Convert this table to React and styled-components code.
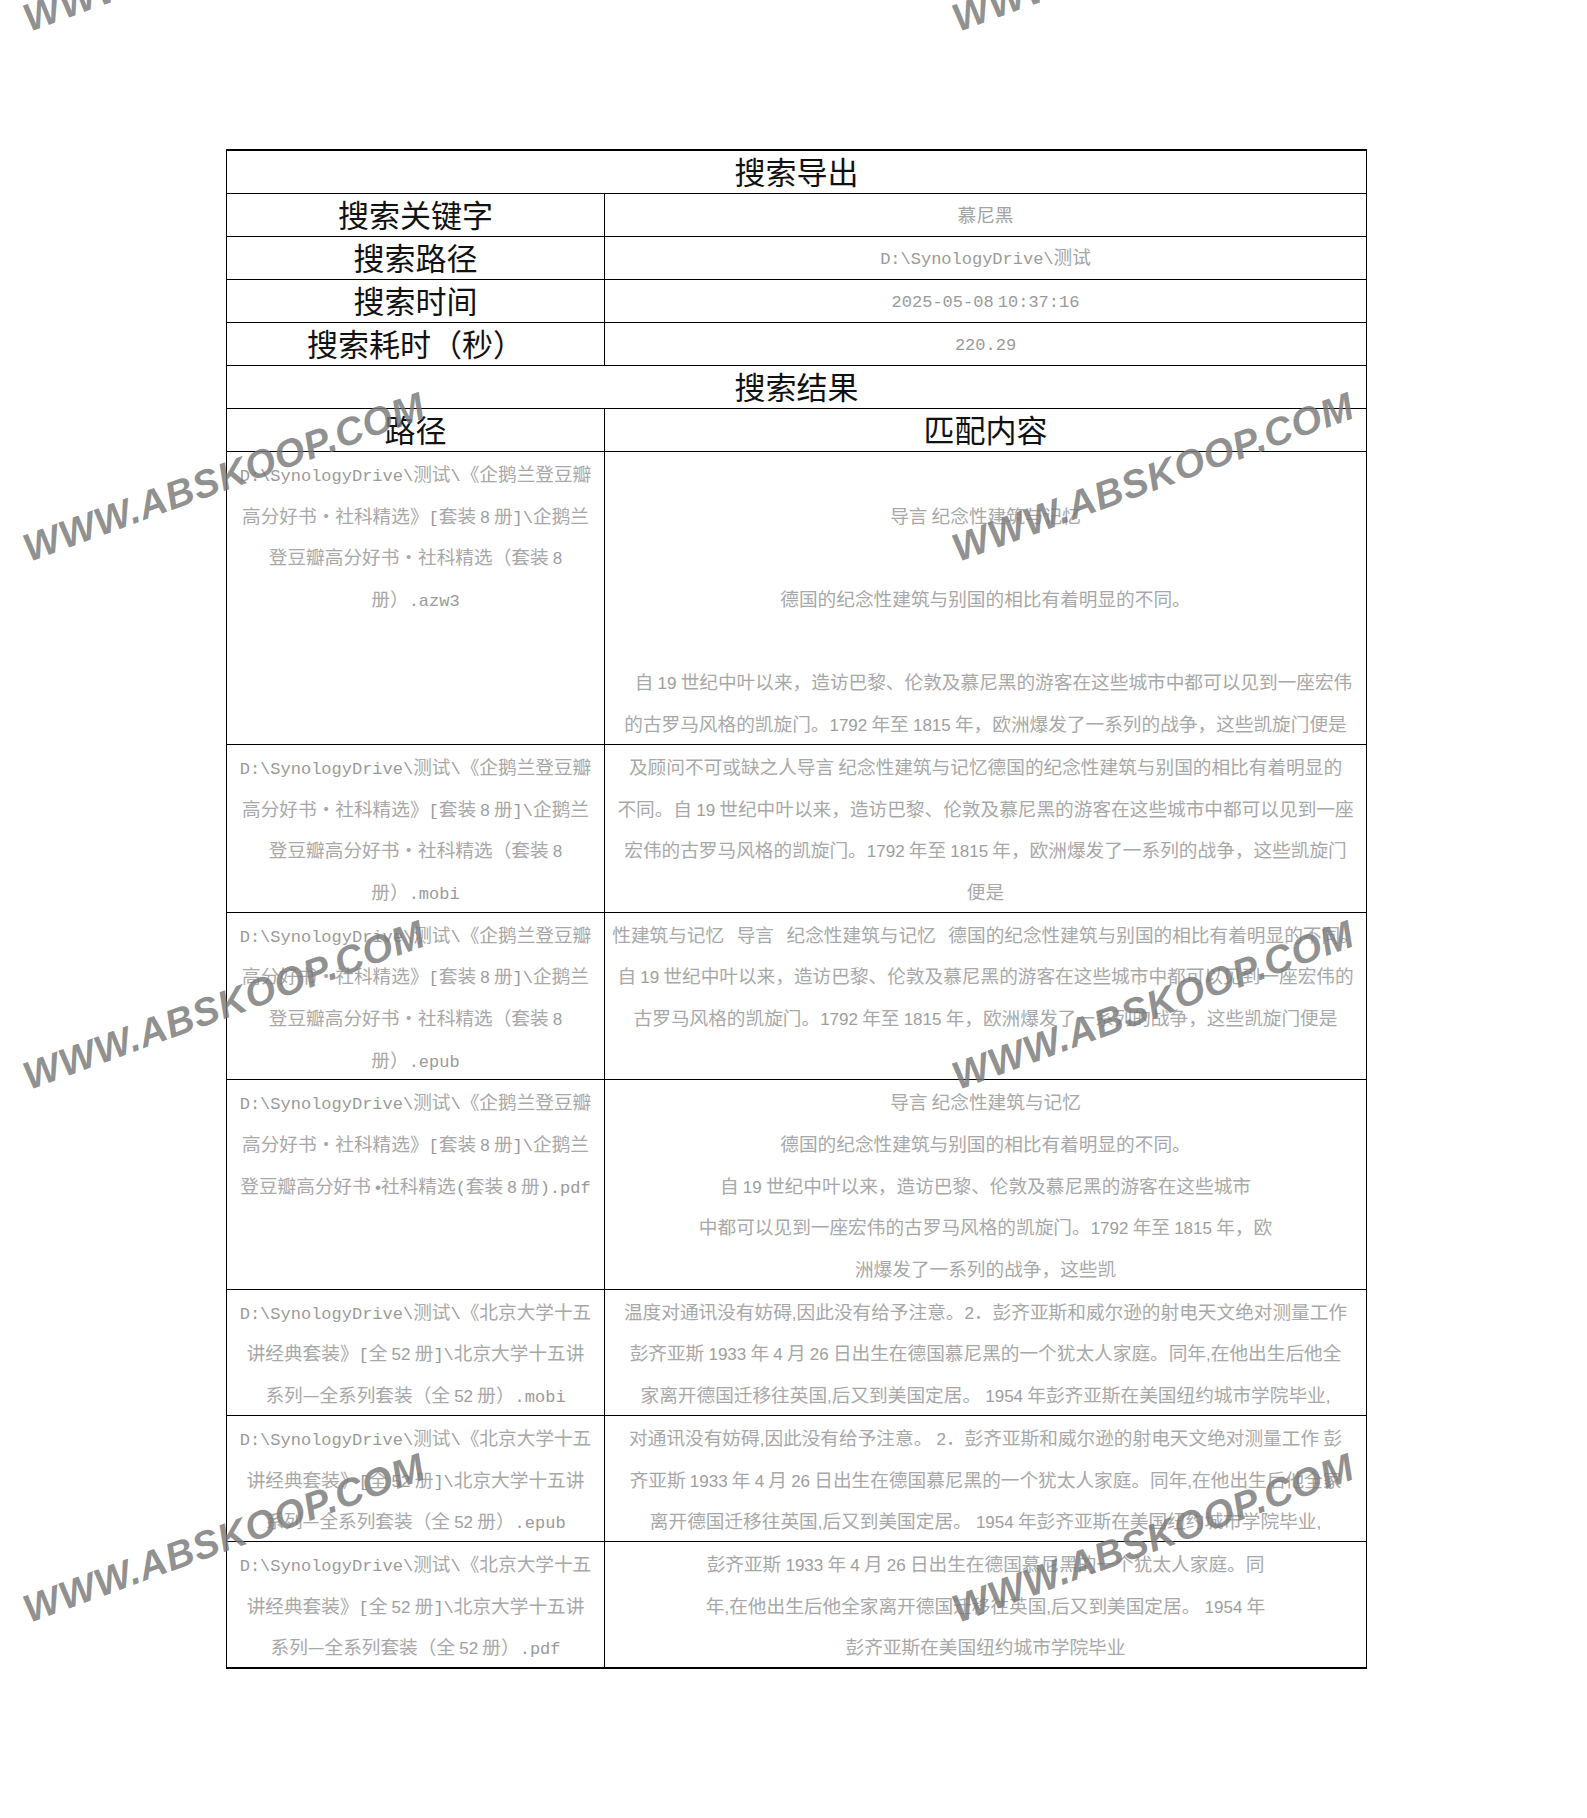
import React from "react";
import styled, { createGlobalStyle } from "styled-components";

const GlobalStyle = createGlobalStyle`
  html, body { margin: 0; padding: 0; background: #ffffff; }
  body { font-family: "Noto Sans CJK SC", "Noto Sans", sans-serif; }
`;

const Page = styled.div`
  position: relative;
  min-height: 1818px;
  overflow: hidden;
  box-sizing: border-box;
  padding: 149px 0 0 226px;
`;

const Sheet = styled.table`
  width: 1140px;
  border-collapse: collapse;
  table-layout: fixed;
  border-top: 2px solid #000;
  border-bottom: 2px solid #000;
  border-left: 1px solid #000;
  border-right: 1px solid #000;
`;

const HeadCell = styled.td`
  height: 38px;
  padding: 0 0 4px;
  border: 1px solid #000;
  text-align: center;
  vertical-align: middle;
  font-family: "Noto Sans CJK SC", sans-serif;
  font-size: 31px;
  line-height: 1;
  color: #111;
  white-space: nowrap;
`;

const ValueCell = styled.td`
  height: 40px;
  padding: 0 0 2px;
  border: 1px solid #000;
  text-align: center;
  vertical-align: middle;
  font-family: "Noto Sans CJK SC", sans-serif;
  font-size: 18.67px;
  line-height: 1;
  color: #a3a3a3;
  white-space: nowrap;
`;

const DataCell = styled.td`
  padding: 0 6px;
  border: 1px solid #000;
  text-align: center;
  vertical-align: top;
  font-family: "Noto Sans CJK SC", sans-serif;
  font-size: 18.67px;
  line-height: 41.7px;
  color: #a8a8a8;
`;

const Line = styled.div`
  height: 41.7px;
  white-space: pre;
  padding-left: ${(p) => (p.$indent ? "16px" : "0")};
`;

const Mono = styled.span`
  font-family: "Liberation Mono", "DejaVu Sans Mono", monospace;
  font-size: 17px;
  color: #9a9a9a;
`;

const Latin = styled.span`
  font-family: "Liberation Sans", Arial, sans-serif;
  font-size: 17px;
  color: #9e9e9e;
`;

const Watermark = styled.span`
  position: absolute;
  left: ${(p) => p.$x}px;
  top: ${(p) => p.$y - 32}px;
  transform-origin: 0 32px;
  transform: rotate(-20deg);
  font-family: "Liberation Sans", Arial, sans-serif;
  font-weight: 700;
  font-style: italic;
  font-size: 39px;
  line-height: 1;
  letter-spacing: 0.8px;
  color: rgba(120, 120, 120, 0.82);
  white-space: nowrap;
  pointer-events: none;
`;

function Runs({ text, mode }) {
  const parts = text.split(/([!-~•]+)/);
  return parts.map((part, i) => {
    if (!part) return null;
    if (/^[!-~•]+$/.test(part)) {
      const latin = /^[0-9•]+$/.test(part);
      if (mode === "path") {
        return latin ? <Latin key={i}>{part}</Latin> : <Mono key={i}>{part}</Mono>;
      }
      if (mode === "value") return <Mono key={i}>{part}</Mono>;
      return <Latin key={i}>{part}</Latin>;
    }
    return <React.Fragment key={i}>{part}</React.Fragment>;
  });
}

const pathA = (ext) => [
  "D:\\SynologyDrive\\测试\\《企鹅兰登豆瓣",
  "高分好书・社科精选》[套装 8 册]\\企鹅兰",
  "登豆瓣高分好书・社科精选（套装 8",
  `册）${ext}`,
];

const pathB = (ext) => [
  "D:\\SynologyDrive\\测试\\《北京大学十五",
  "讲经典套装》[全 52 册]\\北京大学十五讲",
  `系列—全系列套装（全 52 册）${ext}`,
];

const rows = [
  {
    path: pathA(".azw3"),
    content: [
      "",
      "导言 纪念性建筑与记忆",
      "",
      "德国的纪念性建筑与别国的相比有着明显的不同。",
      "",
      { t: "自 19 世纪中叶以来，造访巴黎、伦敦及慕尼黑的游客在这些城市中都可以见到一座宏伟", indent: true },
      "的古罗马风格的凯旋门。1792 年至 1815 年，欧洲爆发了一系列的战争，这些凯旋门便是",
    ],
  },
  {
    path: pathA(".mobi"),
    content: [
      "及顾问不可或缺之人导言 纪念性建筑与记忆德国的纪念性建筑与别国的相比有着明显的",
      "不同。自 19 世纪中叶以来，造访巴黎、伦敦及慕尼黑的游客在这些城市中都可以见到一座",
      "宏伟的古罗马风格的凯旋门。1792 年至 1815 年，欧洲爆发了一系列的战争，这些凯旋门",
      "便是",
    ],
  },
  {
    path: pathA(".epub"),
    content: [
      "性建筑与记忆   导言   纪念性建筑与记忆   德国的纪念性建筑与别国的相比有着明显的不同。",
      "自 19 世纪中叶以来，造访巴黎、伦敦及慕尼黑的游客在这些城市中都可以见到一座宏伟的",
      "古罗马风格的凯旋门。1792 年至 1815 年，欧洲爆发了一系列的战争，这些凯旋门便是",
      "",
    ],
  },
  {
    path: [
      "D:\\SynologyDrive\\测试\\《企鹅兰登豆瓣",
      "高分好书・社科精选》[套装 8 册]\\企鹅兰",
      "登豆瓣高分好书 •社科精选(套装 8 册).pdf",
    ],
    content: [
      "导言 纪念性建筑与记忆",
      "德国的纪念性建筑与别国的相比有着明显的不同。",
      "自 19 世纪中叶以来，造访巴黎、伦敦及慕尼黑的游客在这些城市",
      "中都可以见到一座宏伟的古罗马风格的凯旋门。1792 年至 1815 年，欧",
      "洲爆发了一系列的战争，这些凯",
    ],
  },
  {
    path: pathB(".mobi"),
    content: [
      "温度对通讯没有妨碍,因此没有给予注意。2．彭齐亚斯和威尔逊的射电天文绝对测量工作",
      "彭齐亚斯 1933 年 4 月 26 日出生在德国慕尼黑的一个犹太人家庭。同年,在他出生后他全",
      "家离开德国迁移往英国,后又到美国定居。 1954 年彭齐亚斯在美国纽约城市学院毕业,",
    ],
  },
  {
    path: pathB(".epub"),
    content: [
      "对通讯没有妨碍,因此没有给予注意。 2．彭齐亚斯和威尔逊的射电天文绝对测量工作 彭",
      "齐亚斯 1933 年 4 月 26 日出生在德国慕尼黑的一个犹太人家庭。同年,在他出生后他全家",
      "离开德国迁移往英国,后又到美国定居。 1954 年彭齐亚斯在美国纽约城市学院毕业,",
    ],
  },
  {
    path: pathB(".pdf"),
    content: [
      "彭齐亚斯 1933 年 4 月 26 日出生在德国慕尼黑的一个犹太人家庭。同",
      "年,在他出生后他全家离开德国迁移往英国,后又到美国定居。 1954 年",
      "彭齐亚斯在美国纽约城市学院毕业",
    ],
  },
];

const meta = [
  ["搜索关键字", "慕尼黑"],
  ["搜索路径", "D:\\SynologyDrive\\测试"],
  ["搜索时间", "2025-05-08 10:37:16"],
  ["搜索耗时（秒）", "220.29"],
];

const marks = [
  [29, 31], [958, 31],
  [29, 561], [958, 561],
  [29, 1089], [958, 1089],
  [29, 1622], [958, 1622],
];

export default function App() {
  return (
    <>
      <GlobalStyle />
      <Page>
        <Sheet>
          <colgroup>
            <col style={{ width: "378px" }} />
            <col style={{ width: "762px" }} />
          </colgroup>
          <tbody>
            <tr>
              <HeadCell colSpan={2}>搜索导出</HeadCell>
            </tr>
            {meta.map(([k, v]) => (
              <tr key={k}>
                <HeadCell>{k}</HeadCell>
                <ValueCell>
                  <Runs text={v} mode="value" />
                </ValueCell>
              </tr>
            ))}
            <tr>
              <HeadCell colSpan={2}>搜索结果</HeadCell>
            </tr>
            <tr>
              <HeadCell>路径</HeadCell>
              <HeadCell>匹配内容</HeadCell>
            </tr>
            {rows.map((r, i) => (
              <tr key={i}>
                <DataCell>
                  {r.path.map((l, j) => (
                    <Line key={j}>
                      <Runs text={l} mode="path" />
                    </Line>
                  ))}
                </DataCell>
                <DataCell>
                  {r.content.map((l, j) => {
                    const t = typeof l === "string" ? l : l.t;
                    const indent = typeof l === "string" ? false : l.indent;
                    return (
                      <Line key={j} $indent={indent}>
                        <Runs text={t} mode="content" />
                      </Line>
                    );
                  })}
                </DataCell>
              </tr>
            ))}
          </tbody>
        </Sheet>
        {marks.map(([x, y], i) => (
          <Watermark key={i} $x={x} $y={y}>
            WWW.ABSKOOP.COM
          </Watermark>
        ))}
      </Page>
    </>
  );
}
